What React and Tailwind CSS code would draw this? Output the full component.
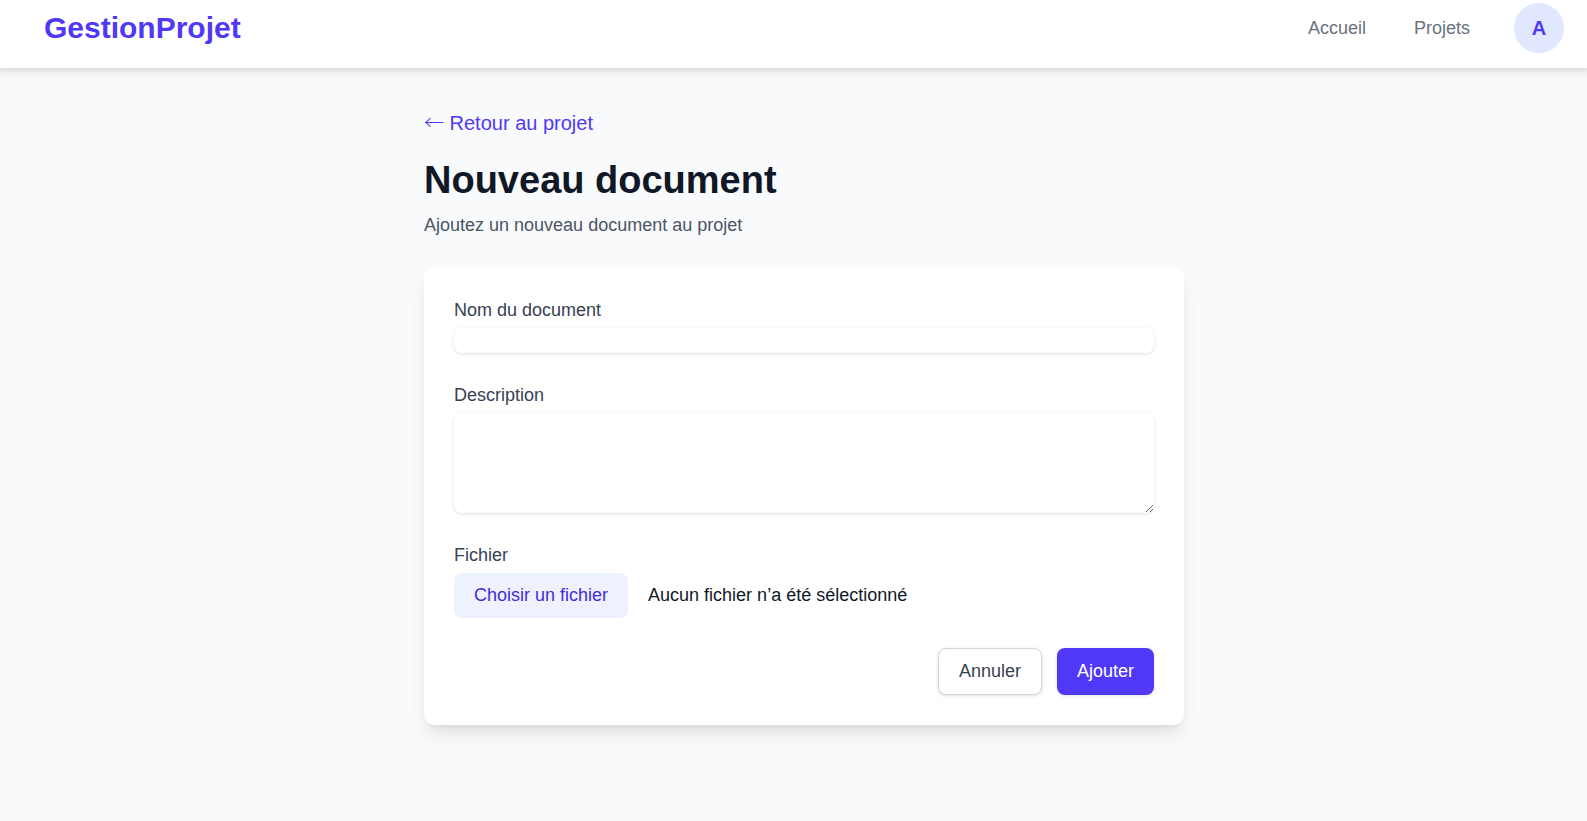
import React, { useState } from "react";

const labelClass = "block text-[18px] leading-[25px] text-gray-700";
const fieldClass =
  "mt-[5px] block w-full rounded-[8px] bg-white text-[18px] leading-[25px] text-gray-900 shadow-[0_1px_4px_0_rgba(0,0,0,0.1),0_1px_2px_-1px_rgba(0,0,0,0.1)] focus:outline-2 focus:outline-indigo-500";

function Header() {
  return (
    <header className="bg-white shadow-[0_0_8px_4px_rgba(0,0,0,0.1),0_0_5px_0_rgba(0,0,0,0.1)]">
      <div className="flex items-center justify-between pt-[3px] pb-[15px] pr-[23px] pl-11">
        <a href="#accueil" className="text-[30px] leading-10 font-bold text-indigo-600">
          GestionProjet
        </a>
        <nav className="flex items-center text-[18px] leading-[25px] text-gray-500">
          <a href="#accueil" className="mr-12">Accueil</a>
          <a href="#projets" className="mr-11">Projets</a>
          <button
            type="button"
            aria-label="Compte"
            className="flex size-[50px] items-center justify-center rounded-full bg-indigo-100 text-[20px] font-bold text-indigo-600"
          >
            A
          </button>
        </nav>
      </div>
    </header>
  );
}

export default function App() {
  const [fileName, setFileName] = useState("");

  return (
    <div className="min-h-screen bg-gray-50 font-['Liberation_Sans',Arial,sans-serif] text-gray-900">
      <Header />
      <div className="pl-[21px]">
        <main className="mx-auto max-w-[840px] px-10 pt-10 pb-10">
          <a href="#projet" className="block h-[30px] w-fit text-[20px] leading-[30px] text-indigo-600">
            <span className="font-['Noto_Sans_CJK_JP',sans-serif] leading-none font-light">←</span> Retour au projet
          </a>
          <h1 className="mt-5 text-[38px] leading-[45px] font-bold">Nouveau document</h1>
          <p className="mt-[10px] text-[18px] leading-[25px] text-gray-600">
            Ajoutez un nouveau document au projet
          </p>
          <form
            onSubmit={(e) => e.preventDefault()}
            className="mt-[30px] flex flex-col gap-[30px] rounded-[10px] bg-white p-[30px] shadow-[0_12px_19px_-4px_rgba(0,0,0,0.1),0_5px_8px_-5px_rgba(0,0,0,0.1)]"
          >
            <div>
              <label htmlFor="nom" className={labelClass}>Nom du document</label>
              <input id="nom" type="text" className={fieldClass} />
            </div>
            <div>
              <label htmlFor="description" className={labelClass}>Description</label>
              <textarea id="description" rows={4} className={fieldClass} />
            </div>
            <div>
              <label htmlFor="fichier" className={labelClass}>Fichier</label>
              <div className="relative mt-[5px] flex items-center gap-5 text-[18px] leading-[25px]">
                <input
                  id="fichier"
                  type="file"
                  className="peer sr-only"
                  onChange={(e) => setFileName(e.target.files[0]?.name ?? "")}
                />
                <label
                  htmlFor="fichier"
                  className="cursor-pointer rounded-[8px] bg-indigo-50 px-5 py-[10px] text-indigo-700 peer-focus-visible:outline-2"
                >
                  Choisir un fichier
                </label>
                <span>{fileName || "Aucun fichier n’a été sélectionné"}</span>
              </div>
            </div>
            <div className="flex justify-end gap-[15px] text-[18px] leading-[25px]">
              <button
                type="button"
                className="rounded-[8px] border border-gray-300 bg-white px-5 py-[10px] text-gray-700 shadow-[0_1px_4px_0_rgba(0,0,0,0.1),0_1px_2px_-1px_rgba(0,0,0,0.1)]"
              >
                Annuler
              </button>
              <button
                type="submit"
                className="rounded-[8px] bg-indigo-600 px-5 py-[11px] text-white shadow-[0_1px_4px_0_rgba(0,0,0,0.1),0_1px_2px_-1px_rgba(0,0,0,0.1)]"
              >
                Ajouter
              </button>
            </div>
          </form>
        </main>
      </div>
    </div>
  );
}
